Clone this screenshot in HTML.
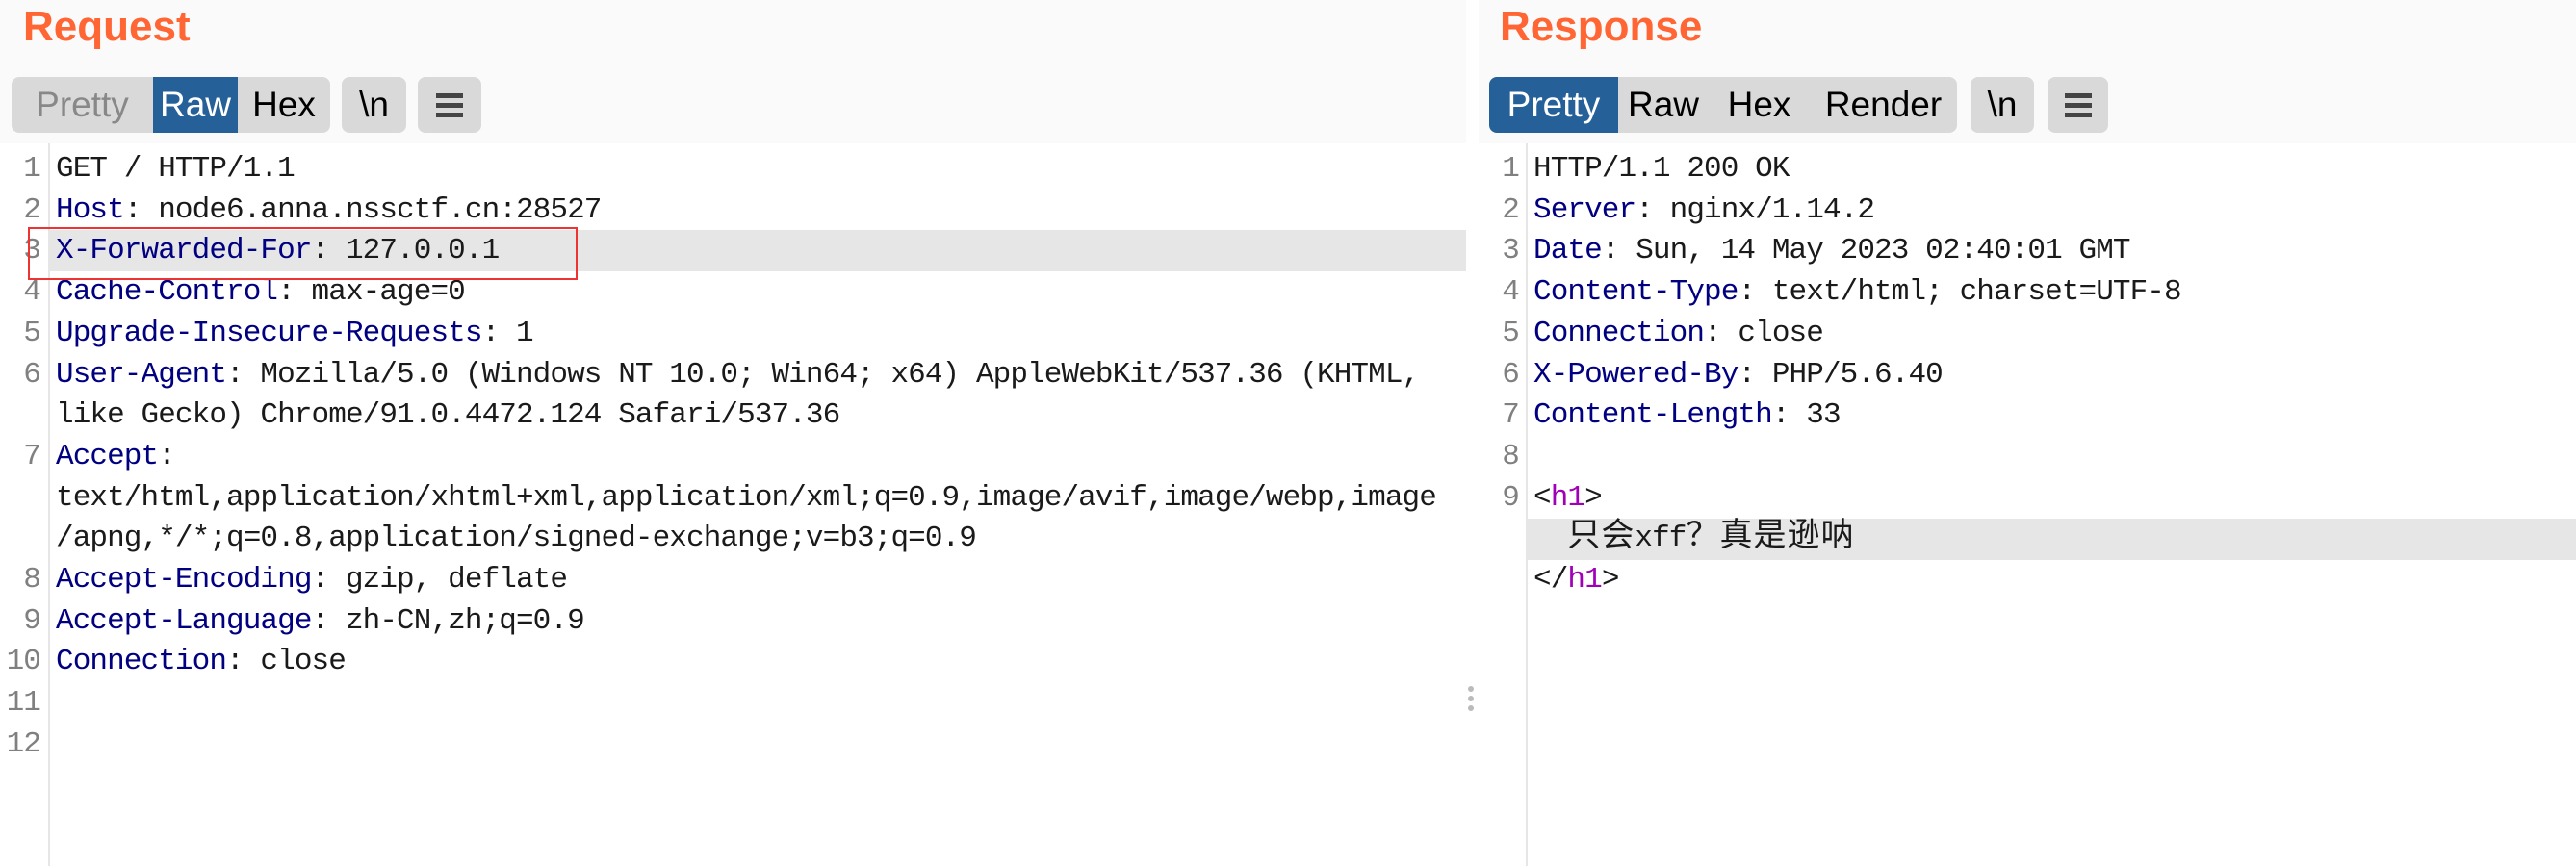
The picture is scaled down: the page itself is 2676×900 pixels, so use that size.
<!DOCTYPE html>
<html><head><meta charset="utf-8"><style>
*{margin:0;padding:0;box-sizing:border-box}
body{width:2676px;height:900px;position:relative;background:#fff;overflow:hidden;font-family:"Liberation Sans",sans-serif}
.hdr{position:absolute;top:0;height:149px;background:#fafafa}
.title{position:absolute;top:-2px;font-weight:bold;font-size:44px;color:#ff6633;line-height:60px}
.btn{position:absolute;top:80px;height:58px;background:#d9d9d9;font-size:37px;line-height:58px;text-align:center;color:#000}
.act{background:#266099;color:#fff}
.code{position:absolute;top:155px;font-family:"Liberation Mono","Noto Sans CJK SC",monospace;font-size:31px;letter-spacing:-0.9px;line-height:42.7px;color:#1a1a1a;white-space:pre}
.num{position:absolute;top:155px;font-family:"Liberation Mono",monospace;font-size:31px;letter-spacing:-0.9px;line-height:42.7px;color:#808080;text-align:right;white-space:pre}
.k{color:#000080}.t{color:#a000b8}
.cj{font-size:34px;letter-spacing:1px;font-family:"Noto Sans CJK SC",sans-serif;line-height:0}
.gut{position:absolute;top:149px;bottom:0;width:2px;background:#e6e6e6}
.hl{position:absolute;height:43px;background:#e6e6e6}
.menu{position:absolute;left:50%;width:28px;margin-left:-14px;height:5px;background:#444}
</style></head><body>
<div class="hdr" style="left:0;width:1523px"></div>
<div class="hdr" style="left:1536px;width:1140px"></div>
<div class="title" style="left:24px">Request</div>
<div class="title" style="left:1558px">Response</div>

<div class="btn" style="left:12px;width:147px;border-radius:8px 0 0 8px;color:#888">Pretty</div>
<div class="btn act" style="left:159px;width:88px">Raw</div>
<div class="btn" style="left:247px;width:96px;border-radius:0 8px 8px 0">Hex</div>
<div class="btn" style="left:355px;width:67px;border-radius:8px">\n</div>
<div class="btn" style="left:434px;width:66px;border-radius:8px"><div class="menu" style="top:17px"></div><div class="menu" style="top:27px"></div><div class="menu" style="top:37px"></div></div>

<div class="btn act" style="left:1547px;width:134px;border-radius:8px 0 0 8px">Pretty</div>
<div class="btn" style="left:1681px;width:94px">Raw</div>
<div class="btn" style="left:1775px;width:105px">Hex</div>
<div class="btn" style="left:1880px;width:153px;border-radius:0 8px 8px 0">Render</div>
<div class="btn" style="left:2047px;width:66px;border-radius:8px">\n</div>
<div class="btn" style="left:2127px;width:63px;border-radius:8px"><div class="menu" style="top:17px"></div><div class="menu" style="top:27px"></div><div class="menu" style="top:37px"></div></div>

<div class="hl" style="left:51px;width:1472px;top:239px"></div>
<div class="hl" style="left:1586px;width:1090px;top:539px"></div>
<div class="gut" style="left:50px"></div>
<div class="gut" style="left:1585px"></div>

<div class="num" style="left:0;width:42px">1
2
3
4
5
6

7


8
9
10
11
12</div>
<div class="code" style="left:58px">GET / HTTP/1.1
<span class="k">Host</span>: node6.anna.nssctf.cn:28527
<span class="k">X-Forwarded-For</span>: 127.0.0.1
<span class="k">Cache-Control</span>: max-age=0
<span class="k">Upgrade-Insecure-Requests</span>: 1
<span class="k">User-Agent</span>: Mozilla/5.0 (Windows NT 10.0; Win64; x64) AppleWebKit/537.36 (KHTML,
like Gecko) Chrome/91.0.4472.124 Safari/537.36
<span class="k">Accept</span>:
text/html,application/xhtml+xml,application/xml;q=0.9,image/avif,image/webp,image
/apng,*/*;q=0.8,application/signed-exchange;v=b3;q=0.9
<span class="k">Accept-Encoding</span>: gzip, deflate
<span class="k">Accept-Language</span>: zh-CN,zh;q=0.9
<span class="k">Connection</span>: close</div>
<div style="position:absolute;left:29px;top:236px;width:571px;height:55px;border:2px solid #ee3333"></div>

<div class="num" style="left:1540px;width:38px">1
2
3
4
5
6
7
8
9</div>
<div class="code" style="left:1593px">HTTP/1.1 200 OK
<span class="k">Server</span>: nginx/1.14.2
<span class="k">Date</span>: Sun, 14 May 2023 02:40:01 GMT
<span class="k">Content-Type</span>: text/html; charset=UTF-8
<span class="k">Connection</span>: close
<span class="k">X-Powered-By</span>: PHP/5.6.40
<span class="k">Content-Length</span>: 33

&lt;<span class="t">h1</span>&gt;
  <span class="cj">只会</span>xff<span class="cj">？真是逊呐</span>
&lt;/<span class="t">h1</span>&gt;</div>

<div style="position:absolute;left:1525px;top:713px;width:6px;height:6px;border-radius:3px;background:#bbb"></div>
<div style="position:absolute;left:1525px;top:723px;width:6px;height:6px;border-radius:3px;background:#bbb"></div>
<div style="position:absolute;left:1525px;top:733px;width:6px;height:6px;border-radius:3px;background:#bbb"></div>
</body></html>
